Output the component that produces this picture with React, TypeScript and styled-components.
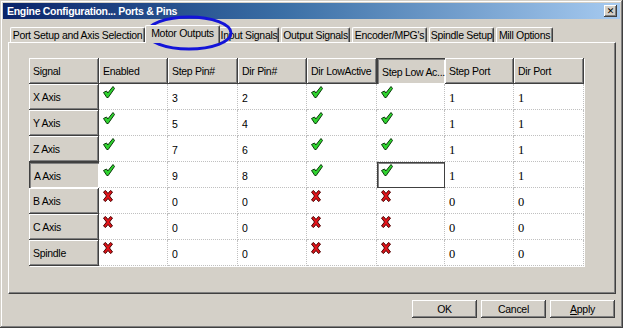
import styled, { createGlobalStyle, css } from "styled-components";

const GlobalStyle = createGlobalStyle`
  html, body {
    margin: 0;
    padding: 0;
    background: #d4d0c8;
  }
  * {
    box-sizing: border-box;
  }
`

const columns = [
    { title: "Signal", width: 70 },
    { title: "Enabled", width: 69 },
    { title: "Step Pin#", width: 70 },
    { title: "Dir Pin#", width: 69 },
    { title: "Dir LowActive", width: 70 },
    { title: "Step Low Ac...", width: 68 },
    { title: "Step Port", width: 69 },
    { title: "Dir Port", width: 70 },
]

type Row = { name: string, on: boolean, step: number, dir: number, dirLow: boolean, stepLow: boolean, stepPort: number, dirPort: number }

const rows: Row[] = [
    { name: "X Axis", on: true, step: 3, dir: 2, dirLow: true, stepLow: true, stepPort: 1, dirPort: 1 },
    { name: "Y Axis", on: true, step: 5, dir: 4, dirLow: true, stepLow: true, stepPort: 1, dirPort: 1 },
    { name: "Z Axis", on: true, step: 7, dir: 6, dirLow: true, stepLow: true, stepPort: 1, dirPort: 1 },
    { name: "A Axis", on: true, step: 9, dir: 8, dirLow: true, stepLow: true, stepPort: 1, dirPort: 1 },
    { name: "B Axis", on: false, step: 0, dir: 0, dirLow: false, stepLow: false, stepPort: 0, dirPort: 0 },
    { name: "C Axis", on: false, step: 0, dir: 0, dirLow: false, stepLow: false, stepPort: 0, dirPort: 0 },
    { name: "Spindle", on: false, step: 0, dir: 0, dirLow: false, stepLow: false, stepPort: 0, dirPort: 0 },
]

const tabs = [
    { label: "Port Setup and Axis Selection", width: 135 },
    { label: "Motor Outputs", width: 75 },
    { label: "Input Signals", width: 60 },
    { label: "Output Signals", width: 69 },
    { label: "Encoder/MPG's", width: 75 },
    { label: "Spindle Setup", width: 65 },
    { label: "Mill Options", width: 57 },
]

const CURRENT_ROW = 3
const CURRENT_COL = 5

const Check = () => (
    <svg width="12" height="12" viewBox="0 0 12 12">
        <path d="M0.5 6.5 L3.5 5 L4.8 7 L10 0.5 L11.5 2.5 L5.2 11.5 L3.8 11.5 Z"
              fill="#2fd42f" stroke="#0b3a0b" strokeWidth="1" strokeLinejoin="round"/>
    </svg>
)

const Cross = () => (
    <svg width="10" height="12" viewBox="0 0 10 12">
        <path d="M0.5 2 L2.5 0.5 L5 3.5 L7.5 0.5 L9.5 2 L6.5 6 L9.5 10 L7.5 11.5 L5 8.5 L2.5 11.5 L0.5 10 L3.5 6 Z"
              fill="#e3141a" stroke="#4a0000" strokeWidth="1" strokeLinejoin="round"/>
    </svg>
)

const Flag = (props: { on: boolean }) => props.on ? <Check/> : <Cross/>

export default function App() {
    return (
        <>
            <GlobalStyle/>
            <Window>
                <TitleBar>
                    <Title>Engine Configuration... Ports &amp; Pins</Title>
                    <CloseButton>✕</CloseButton>
                </TitleBar>
                <Body>
                    <TabStrip>
                        {tabs.map((tab, index) => (
                            <Tab key={index} $active={index === 1} $width={tab.width}>{tab.label}</Tab>
                        ))}
                    </TabStrip>
                    <Panel>
                        <Grid>
                            {columns.map((col, index) => (
                                <HeaderCell key={index} $pressed={index === CURRENT_COL}>{col.title}</HeaderCell>
                            ))}
                            {rows.map((row, r) => {
                                const values = [
                                    <Flag on={row.on}/>,
                                    row.step,
                                    row.dir,
                                    <Flag on={row.dirLow}/>,
                                    <Flag on={row.stepLow}/>,
                                    row.stepPort,
                                    row.dirPort,
                                ]
                                return [
                                    <RowHeader key={`h${r}`} $pressed={r === CURRENT_ROW}>{row.name}</RowHeader>,
                                    ...values.map((value, c) => {
                                        const isIcon = typeof value !== "number"
                                        return (
                                            <Cell key={`${r}-${c}`} $icon={isIcon} $serif={c >= 5}
                                                  $focused={r === CURRENT_ROW && c + 1 === CURRENT_COL}>
                                                {value}
                                            </Cell>
                                        )
                                    })
                                ]
                            })}
                        </Grid>
                    </Panel>
                    <ButtonRow>
                        <Button>OK</Button>
                        <Button>Cancel</Button>
                        <Button><u>A</u>pply</Button>
                    </ButtonRow>
                </Body>
                <Highlight width="88" height="36" viewBox="0 0 88 36">
                    <ellipse cx="44" cy="18" rx="42" ry="16" fill="none" stroke="#1414d8" strokeWidth="3"/>
                </Highlight>
            </Window>
        </>
    )
}

const uiFont = css`
  font-family: "Liberation Sans", Arial, sans-serif;
  font-size: 10.5px;
  letter-spacing: -0.3px;
  color: #000;
`

const raised = css`
  box-shadow: inset -1px -1px #404040, inset 1px 1px #ffffff, inset -2px -2px #808080;
`

const Window = styled.div`
  position: relative;
  width: 623px;
  height: 328px;
  padding: 3px;
  background: #d4d0c8;
  box-shadow: inset -1px -1px #404040, inset 1px 1px #d4d0c8, inset -2px -2px #808080, inset 2px 2px #ffffff;
  ${uiFont};
`

const TitleBar = styled.div`
  display: flex;
  align-items: center;
  justify-content: space-between;
  height: 16px;
  padding: 0 3px 0 4px;
  background: linear-gradient(to right, #0a246a, #3a6ea5 45%, #a6caf0);
`

const Title = styled.span`
  font-family: "Liberation Sans", Arial, sans-serif;
  font-weight: bold;
  font-size: 10.5px;
  letter-spacing: -0.3px;
  color: #ffffff;
`

const CloseButton = styled.span`
  display: flex;
  align-items: center;
  justify-content: center;
  width: 13px;
  height: 12px;
  font-size: 9px;
  font-weight: bold;
  letter-spacing: 0;
  font-family: "DejaVu Sans", sans-serif;
  background: #d4d0c8;
  ${raised};
`

const Body = styled.div`
  display: flex;
  flex-direction: column;
  padding: 6px 4px 0 5px;
`

const TabStrip = styled.div`
  display: flex;
  align-items: flex-end;
  height: 17px;
  padding-left: 2px;
`

const Tab = styled.div<{ $active: boolean, $width: number }>`
  display: flex;
  flex-shrink: 0;
  align-items: center;
  justify-content: center;
  width: ${p => p.$width}px;
  height: ${p => p.$active ? 18 : 15}px;
  margin: ${p => p.$active ? "0 -1px -1px -2px" : "0 2px 0 0"};
  padding-bottom: ${p => p.$active ? 3 : 0}px;
  position: relative;
  z-index: ${p => p.$active ? 1 : 0};
  white-space: nowrap;
  background: #d4d0c8;
  border-top: 1px solid #ffffff;
  border-left: 1px solid #ffffff;
  border-right: 1px solid #404040;
  border-top-left-radius: 2px;
  border-top-right-radius: 2px;
  box-shadow: inset -1px 0 #808080;
`

const Panel = styled.div`
  height: 252px;
  padding: 15px 0 0 20px;
  background: #d4d0c8;
  border-top: 1px solid #ffffff;
  border-left: 1px solid #ffffff;
  border-right: 1px solid #404040;
  border-bottom: 1px solid #404040;
  box-shadow: inset -1px -1px #808080;
`

const Grid = styled.div`
  display: grid;
  grid-template-columns: ${columns.map(c => `${c.width}px`).join(" ")};
  grid-auto-rows: 26px;
  width: max-content;
  background: #ffffff;
  box-shadow: 1px 1px #ffffff;
`

const headerLook = css<{ $pressed: boolean }>`
  display: flex;
  align-items: center;
  padding: ${p => p.$pressed ? "1px 0 0 5px" : "0 0 0 4px"};
  background: #d4d0c8;
  white-space: nowrap;
  overflow: hidden;
  ${p => p.$pressed
    ? css`box-shadow: inset 1px 1px #404040, inset 2px 2px #808080, inset -1px -1px #ffffff;`
    : css`box-shadow: inset -1px -1px #404040, inset 1px 1px #ffffff, inset -2px -2px #808080;`}
`

const HeaderCell = styled.div<{ $pressed: boolean }>`
  ${headerLook};
`

const RowHeader = styled.div<{ $pressed: boolean }>`
  ${headerLook};
`

const Cell = styled.div<{ $icon: boolean, $focused: boolean, $serif: boolean }>`
  display: flex;
  align-items: flex-start;
  padding: ${p => p.$icon ? "2px 0 0 4px" : "8px 0 0 4px"};
  background: #ffffff;
  border-right: 1px dotted #c0c0c0;
  border-bottom: 1px dotted #c0c0c0;
  ${p => p.$serif && css`
    font-family: "Liberation Serif", "Times New Roman", serif;
    font-size: 12.5px;
    letter-spacing: 0;
    padding-top: 7px;
  `}
  ${p => p.$focused && css`
    border: 1px solid #404040;
    box-shadow: inset 1px 1px #808080;
    padding: 1px 0 0 3px;
  `}
`

const ButtonRow = styled.div`
  display: flex;
  justify-content: flex-end;
  gap: 4px;
  margin-top: 6px;
  padding-right: 1px;
`

const Button = styled.div`
  display: flex;
  align-items: center;
  justify-content: center;
  width: 65px;
  height: 18px;
  background: #d4d0c8;
  ${raised};
`

const Highlight = styled.svg`
  position: absolute;
  left: 145px;
  top: 15px;
  pointer-events: none;
`
